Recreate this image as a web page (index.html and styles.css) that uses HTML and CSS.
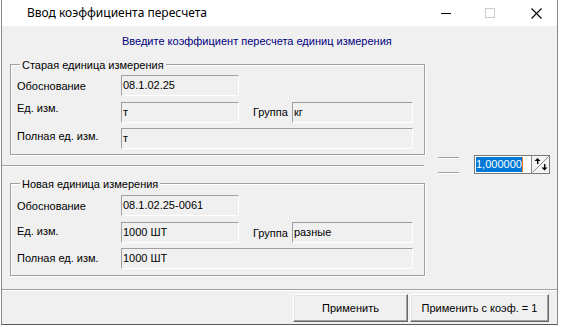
FILE: index.html
```html
<!DOCTYPE html>
<html lang="ru">
<head>
<meta charset="utf-8">
<title>Ввод коэффициента пересчета</title>
<link rel="stylesheet" href="styles.css">
</head>
<body>
<div class="window">
  <div class="titlebar">
    <span class="title">Ввод коэффициента пересчета</span>
    <div class="caption-btns">
      <svg class="ic-min" width="10" height="11" viewBox="0 0 10 11"><rect x="0" y="5" width="10" height="1" fill="#000"/></svg>
      <svg class="ic-max" width="10" height="11" viewBox="0 0 10 11"><rect x="0.5" y="0.5" width="9" height="9" fill="none" stroke="#cccccc"/></svg>
      <svg class="ic-close" width="11" height="11" viewBox="0 0 11 11"><path d="M0.5 0.5 L10.5 10.5 M10.5 0.5 L0.5 10.5" stroke="#000" stroke-width="1.1" fill="none"/></svg>
    </div>
  </div>
  <div class="client">
    <div class="subtitle">Введите коэффициент пересчета единиц измерения</div>
    <div class="main">
      <div class="left">
        <div class="group g1">
          <span class="caption">Старая единица измерения</span>
          <div class="row ra">
            <span class="lbl">Обоснование</span>
            <span class="field w118">08.1.02.25</span>
          </div>
          <div class="row rb">
            <span class="lbl">Ед. изм.</span>
            <span class="field w118">т</span>
            <span class="lbl2">Группа</span>
            <span class="field w121">кг</span>
          </div>
          <div class="row rc">
            <span class="lbl">Полная ед. изм.</span>
            <span class="field w292">т</span>
          </div>
        </div>
        <div class="sep"></div>
        <div class="group g2">
          <span class="caption">Новая единица измерения</span>
          <div class="row ra">
            <span class="lbl">Обоснование</span>
            <span class="field w118">08.1.02.25-0061</span>
          </div>
          <div class="row rb">
            <span class="lbl">Ед. изм.</span>
            <span class="field w118">1000 ШТ</span>
            <span class="lbl2">Группа</span>
            <span class="field w121">разные</span>
          </div>
          <div class="row rc">
            <span class="lbl">Полная ед. изм.</span>
            <span class="field w292">1000 ШТ</span>
          </div>
        </div>
      </div>
      <div class="right">
        <div class="etch-lines"><i></i><i></i></div>
        <div class="spin">
          <span class="spin-val"><span class="sel">1,000000</span><span class="caret"></span></span>
          <span class="spin-btn">
            <svg width="17" height="17" viewBox="0 0 17 17">
              <path d="M0.5 16.5 L16.5 0.5" stroke="#8a8a8a" stroke-width="1" fill="none"/>
              <polygon points="2.5,5 5.5,2 8.5,5" fill="#000"/>
              <rect x="5" y="4" width="1.4" height="4" fill="#000"/>
              <polygon points="9.5,11.5 12.5,14.5 15.5,11.5" fill="#000"/>
              <rect x="12" y="8" width="1.4" height="4" fill="#000"/>
            </svg>
          </span>
        </div>
      </div>
    </div>
    <div class="footer-sep"></div>
    <div class="footer">
      <button class="btn b1">Применить</button>
      <button class="btn b2">Применить с коэф. = 1</button>
    </div>
  </div>
</div>
</body>
</html>
```
FILE: styles.css
```css
html, body {
  margin: 0;
  padding: 0;
  background: #ffffff;
}
body {
  font-family: "Liberation Sans", Arial, sans-serif;
  font-size: 11px;
  color: #000;
}
.window {
  margin-left: 1px;
  width: 557px;
  height: 325px;
  box-sizing: border-box;
  border: 1px solid #868686;
  border-top: 0;
  border-bottom-color: #5a5a5a;
  background: #f0f0f0;
  display: flex;
  flex-direction: column;
}
.titlebar {
  height: 26px;
  flex: none;
  background: #ffffff;
  display: flex;
  align-items: center;
}
.title {
  margin-left: 25px;
  font-family: "Noto Sans", "Open Sans", sans-serif;
  font-size: 12px;
  line-height: 16px;
  color: #000;
}
.caption-btns {
  margin-left: auto;
  align-self: flex-start;
  padding-top: 8px;
  padding-right: 15px;
  display: flex;
  align-items: flex-start;
}
.caption-btns svg { display: block; }
.ic-max { margin-left: 34px; }
.ic-close { margin-left: 36px; }

.client {
  flex: 1;
  display: flex;
  flex-direction: column;
}
.subtitle {
  margin-top: 9px;
  margin-left: 120px;
  line-height: 13px;
  color: #000080;
  white-space: nowrap;
}
.main {
  margin-top: 16px;
  display: flex;
}
.left {
  width: 424px;
  flex: none;
}
.group {
  position: relative;
  margin-left: 8px;
  width: 415px;
  box-sizing: border-box;
  border: 1px solid #a0a0a0;
  box-shadow: inset 1px 1px 0 #ffffff, 1px 1px 0 #ffffff;
}
.g1 { padding: 10px 0 5px 6px; }
.g2 { margin-top: 16px; padding: 11px 0 6px 6px; }
.caption {
  position: absolute;
  top: -6px;
  left: 9px;
  padding: 0 2px;
  line-height: 13px;
  background: #f0f0f0;
  white-space: nowrap;
}
.row {
  display: flex;
  align-items: flex-start;
  height: 21px;
}
.row + .row { margin-top: 6px; }
.row.rc { margin-top: 5px; }
.lbl {
  width: 104px;
  flex: none;
  line-height: 13px;
  white-space: nowrap;
}
.lbl2 {
  width: 39px;
  flex: none;
  margin-left: 14px;
  line-height: 13px;
  white-space: nowrap;
}
.g1 .ra .lbl { margin-top: 5px; }
.g1 .rb .lbl { margin-top: 0px; }
.g1 .rb .lbl2 { margin-top: 4px; }
.g1 .rc .lbl { margin-top: 2px; }
.g2 .ra .lbl { margin-top: 5px; }
.g2 .rb .lbl { margin-top: 3px; }
.g2 .rb .lbl2 { margin-top: 5px; }
.g2 .rc .lbl { margin-top: 4px; }

.field {
  height: 21px;
  box-sizing: border-box;
  border: 1px solid;
  border-color: #a0a0a0 #ffffff #ffffff #a0a0a0;
  background: #f0f0f0;
  padding-left: 1px;
  line-height: 18px;
  white-space: nowrap;
  overflow: hidden;
}
.w118 { width: 118px; }
.w121 { width: 121px; }
.w292 { width: 292px; }

.sep {
  margin-top: 10px;
  width: 422px;
  height: 1px;
  background: #a0a0a0;
  border-bottom: 1px solid #ffffff;
}

.right {
  padding-top: 91px;
  display: flex;
  align-items: flex-start;
}
.etch-lines {
  margin-left: 12px;
  width: 21px;
  height: 19px;
  box-sizing: border-box;
  padding-top: 2px;
  display: flex;
  flex-direction: column;
  gap: 13px;
}
.etch-lines i {
  display: block;
  height: 1px;
  background: #a0a0a0;
  border-bottom: 1px solid #ffffff;
}
.spin {
  margin-left: 15px;
  width: 76px;
  height: 19px;
  box-sizing: border-box;
  border: 1px solid #7a7a7a;
  background: #ffffff;
  display: flex;
}
.spin-val {
  flex: 1;
  padding: 1px 0 0 1px;
  display: flex;
  align-items: flex-start;
}
.sel {
  background: #0078d7;
  color: #ffffff;
  line-height: 15px;
  height: 15px;
  white-space: nowrap;
}
.caret {
  width: 1px;
  height: 15px;
  background: #e87a1e;
}
.spin-btn {
  width: 18px;
  flex: none;
  box-sizing: border-box;
  border-left: 1px solid #8a8a8a;
  background: #f4f4f4;
}
.spin-btn svg { display: block; }

.footer-sep {
  margin-top: 13px;
  height: 1px;
  background: #a0a0a0;
  border-bottom: 1px solid #ffffff;
}
.footer {
  display: flex;
  justify-content: flex-end;
  gap: 2px;
  padding: 3px 8px 2px 0;
}
.btn {
  height: 28px;
  box-sizing: border-box;
  margin: 0;
  padding: 0;
  font-family: "Liberation Sans", Arial, sans-serif;
  font-size: 11px;
  color: #000;
  background: #f0f0f0;
  border: 1px solid;
  border-color: #ffffff #696969 #696969 #ffffff;
  box-shadow: inset -1px -1px 0 #a0a0a0, inset 1px 1px 0 #e3e3e3;
}
.b1 { width: 115px; }
.b2 { width: 139px; }
```
